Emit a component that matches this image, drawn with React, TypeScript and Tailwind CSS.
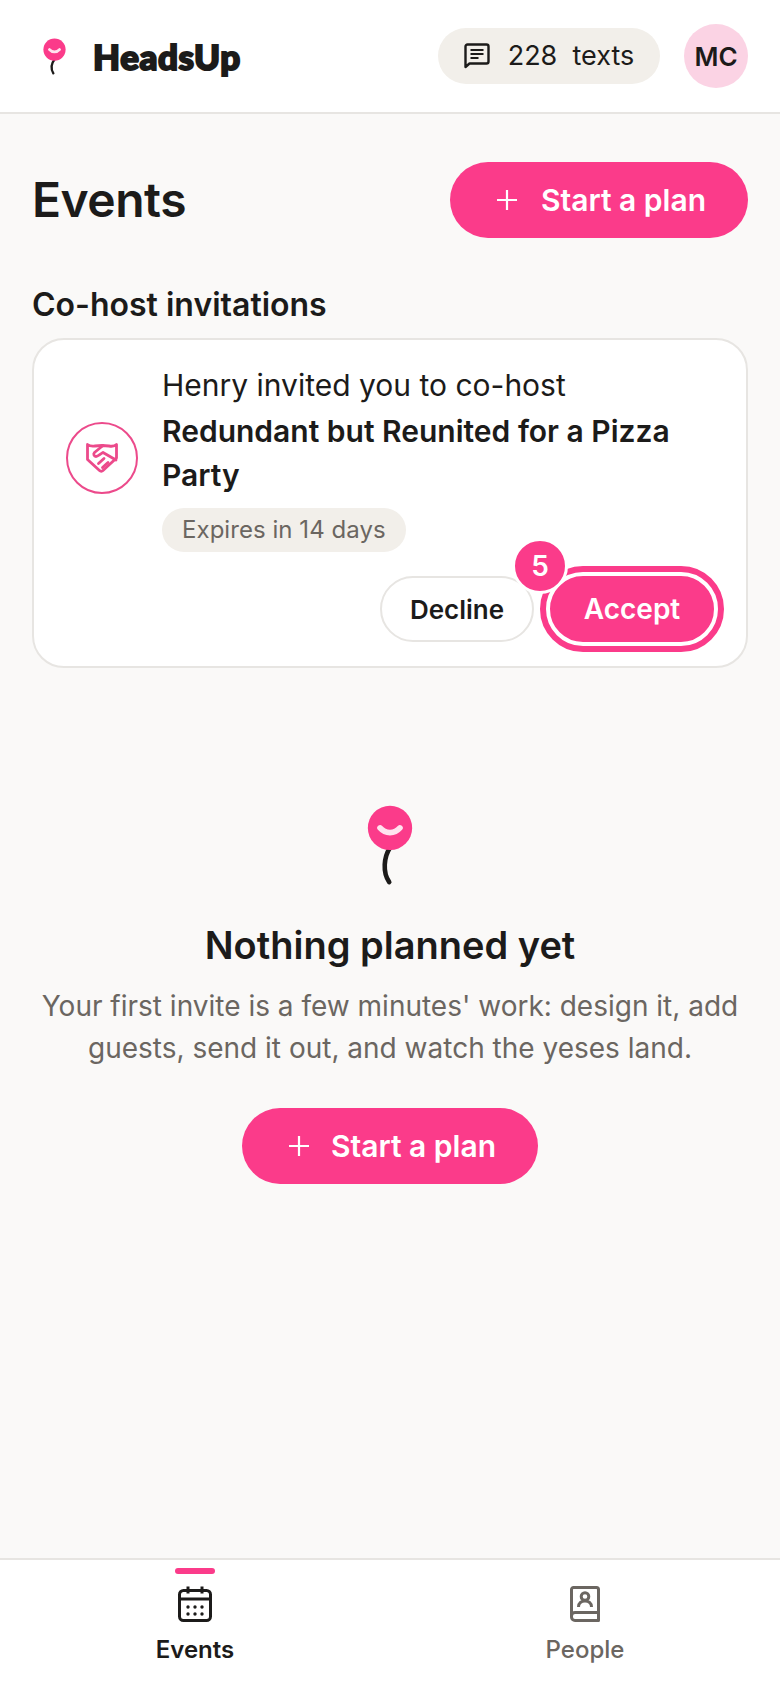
import React from "react";

const font = { fontFamily: "Inter, sans-serif" };

const Balloon = ({ className, small }: { className: string; small?: boolean }) => (
    <svg viewBox={small ? "0 0 60 96" : "0 0 60 106"} className={className} fill="none">
        <path d={small ? "M30 56 C22 66 20 80 27 92" : "M30 56 C22 68 20 88 29 101"} stroke="#1c1b1a" strokeWidth="6" strokeLinecap="round" />
        <circle cx="30" cy="30" r="29" fill="#fb3b8a" />
        <path d="M17 30 C24 38 36 38 43 30" stroke="#ffe3ef" strokeWidth="7.500" strokeLinecap="round" />
    </svg>
);

const ChatIcon = () => (
    <svg viewBox="0 0 26 26" className="w-[26px] h-[26px]" fill="none" stroke="#1c1b1a" strokeWidth="2.4" strokeLinejoin="round">
        <path d="M1.5 24V3.5a2 2 0 0 1 2-2h19a2 2 0 0 1 2 2v15a2 2 0 0 1-2 2H5.5z" />
        <path d="M6.5 7h13M6.5 11h13M6.5 15h8" strokeWidth="2" />
    </svg>
);

const PlusIcon = () => (
    <svg viewBox="0 0 24 24" className="w-6 h-6" fill="none" stroke="#fff" strokeWidth="2.2">
        <path d="M12 2v20M2 12h20" />
    </svg>
);

const HandshakeIcon = () => (
    <svg viewBox="0 0 32 30" className="w-8 h-[30px] -mt-[1px]" fill="none" stroke="#ec4a8b" strokeWidth="2.8" strokeLinejoin="round" strokeLinecap="round">
        <path d="M1.500 1.500C3.500 3 6 3.500 9 3l7-.5 7 .5c3 .5 6 0 7.500-1.500V15L17 27.500c-1 1-2.500 1-3.500 0L1.500 16.500Z" />
        <path d="M17 2.500 8.500 9.500C7 11 8 13.500 10 13.500c2 0 4-2.500 7-4l13 7.500" />
        <path d="M12.500 20.500 18 15.500M16.500 24.500 22 19.500" />
    </svg>
);

const CalendarIcon = () => (
    <svg viewBox="0 0 34 36" className="w-[34px] h-9" fill="none" stroke="#1c1b1a" strokeWidth="3">
        <rect x="1.5" y="4.5" width="31" height="30" rx="4" />
        <path d="M1.5 13h31M10 0.5v7M24 0.5v7" />
        <g fill="#1c1b1a" stroke="none">
            <circle cx="10" cy="21" r="1.7" />
            <circle cx="17" cy="21" r="1.7" />
            <circle cx="24" cy="21" r="1.7" />
            <circle cx="10" cy="28" r="1.7" />
            <circle cx="17" cy="28" r="1.7" />
            <circle cx="24" cy="28" r="1.7" />
        </g>
    </svg>
);

const BookIcon = () => (
    <svg viewBox="0 0 30 36" className="w-[30px] h-9" fill="none" stroke="#6b6661" strokeWidth="3" strokeLinejoin="round">
        <path d="M1.5 30V3.5a2 2 0 0 1 2-2h23a2 2 0 0 1 2 2v31H5a3.5 3.5 0 0 1-3.5-3.5v-1A3.5 3.5 0 0 1 5 26.5h23.5" />
        <circle cx="15" cy="10.5" r="3.8" />
        <path d="M8.5 21c0-4 3-6 6.5-6s6.500 2 6.500 6" />
    </svg>
);

export default function App() {
    return (
        <div className="h-[1688px] flex flex-col bg-[#faf9f8] text-[#1c1b1a]" style={font}>
            {/* Top bar */}
            <header className="h-[114px] shrink-0 flex items-center justify-between pl-[43px] pr-8 bg-white border-b-2 border-[#e7e5e2]">
                <div className="flex items-center gap-[27px]">
                    <Balloon small className="w-[23px] h-[37px] mt-[1px]" />
                    <span className="text-[35px] font-black tracking-[0.6px] [-webkit-text-stroke:2px_#1c1b1a]" style={{ fontFamily: "Lato, sans-serif" }}>HeadsUp</span>
                </div>
                <div className="flex items-center gap-6">
                    <div className="h-14 w-[222px] rounded-full bg-[#f2efea] flex items-center justify-center gap-[18px]">
                        <ChatIcon />
                        <span className="text-[27px] whitespace-pre">228  texts</span>
                    </div>
                    <div className="w-16 h-16 rounded-full bg-[#fbd3e4] flex items-center justify-center text-[26px] font-semibold">MC</div>
                </div>
            </header>

            <main className="flex-1 px-8 pt-12">
                <div className="flex items-center justify-between">
                    <h1 className="text-[48px] font-semibold tracking-[-0.5px]">Events</h1>
                    <button className="h-[76px] w-[298px] rounded-full bg-[#fb3b8a] text-white text-[30px] font-semibold flex items-center justify-center gap-[22px] pl-[3px]">
                        <PlusIcon />
                        Start a plan
                    </button>
                </div>

                <h2 className="mt-[45px] text-[32px] leading-[44px] font-semibold">Co-host invitations</h2>

                {/* Invitation card */}
                <section className="mt-[11px] h-[330px] rounded-[32px] border-2 border-[#e7e5e2] bg-white pt-[25px] pr-[22px] pl-[32px]">
                    <div className="flex items-center gap-6">
                        <div className="w-[72px] h-[72px] shrink-0 -mt-[1px] rounded-full border-2 border-[#ec4a8b] flex items-center justify-center">
                            <HandshakeIcon />
                        </div>
                        <div>
                            <p className="-mt-[2px] mb-[2px] text-[30px] leading-[44px]">Henry invited you to co-host</p>
                            <p className="text-[30px] leading-[44px] font-semibold">Redundant but Reunited for a Pizza Party</p>
                            <span className="mt-[11px] inline-block h-11 leading-[44px] px-5 rounded-full bg-[#f2efea] text-[24px] tracking-[0.05px] text-[#6b6661]">Expires in 14 days</span>
                        </div>
                    </div>
                    <div className="flex justify-end items-center gap-[6px] mt-[14px]">
                        <button className="h-[66px] w-[154px] rounded-full border-2 border-[#e7e5e2] bg-white text-[26px] font-semibold">Decline</button>
                        <div className="relative">
                            <button className="w-[184px] h-[86px] rounded-full bg-[#fb3b8a] border-[6px] border-[#fb3b8a] text-white text-[28px] font-semibold">
                                <span className="flex items-center justify-center w-full h-full rounded-full border-[4px] border-white">Accept</span>
                            </button>
                            <span className="absolute -left-[28px] -top-[28px] w-[56px] h-[56px] rounded-full bg-[#fb3b8a] border-[3px] border-white text-white text-[28px] font-semibold flex items-center justify-center">5</span>
                        </div>
                    </div>
                </section>

                {/* Empty state */}
                <section className="mt-[137px] flex flex-col items-center text-center">
                    <Balloon className="w-[46px] h-[81px]" />
                    <h3 className="mt-[31px] text-[38px] leading-[56px] font-semibold">Nothing planned yet</h3>
                    <p className="mt-[12px] text-[28px] leading-[42px] text-[#6b6661]">Your first invite is a few minutes' work: design it, add<br />guests, send it out, and watch the yeses land.</p>
                    <button className="mt-[39px] h-[76px] w-[296px] rounded-full bg-[#fb3b8a] text-white text-[30px] font-semibold flex items-center justify-center gap-[20px] pl-[3px]">
                        <PlusIcon />
                        Start a plan
                    </button>
                </section>
            </main>

            {/* Bottom nav */}
            <nav className="h-[130px] shrink-0 bg-white border-t-2 border-[#e7e5e2] grid grid-cols-2">
                <div className="relative flex flex-col items-center pt-[26px]">
                    <span className="absolute top-[8px] w-10 h-[6px] rounded-full bg-[#fb3b8a]" />
                    <CalendarIcon />
                    <span className="mt-[10px] text-[24px] font-semibold">Events</span>
                </div>
                <div className="flex flex-col items-center pt-[26px]">
                    <BookIcon />
                    <span className="mt-[10px] text-[24px] font-medium text-[#6b6661]">People</span>
                </div>
            </nav>
        </div>
    );
}
